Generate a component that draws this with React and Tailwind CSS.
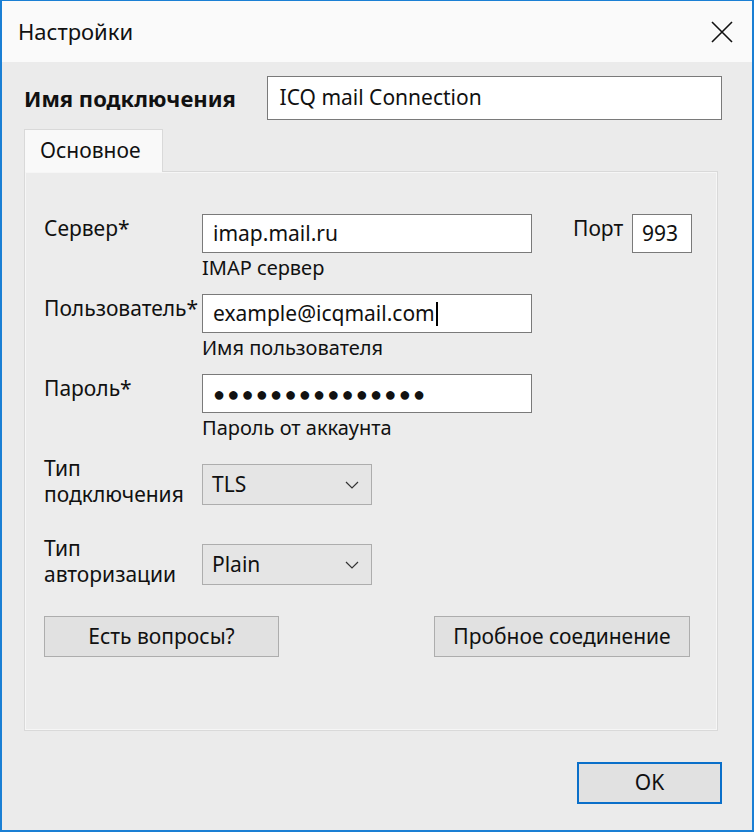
import React from 'react';

const font = { fontFamily: '"Noto Sans", "Open Sans", sans-serif' };

const Chevron = () => (
  <svg width="14" height="8" viewBox="0 0 14 8" className="shrink-0">
    <polyline points="1,1 7,7 13,1" fill="none" stroke="#333" strokeWidth="1.2" />
  </svg>
);

const Field = ({ label, value, hint, caret, dots, children }) => (
  <div className="flex h-[80px] items-start">
    <div className="w-[158px] text-[21px] leading-[28px]">{label}</div>
    <div className="flex flex-col">
      <div className="flex h-[39px] w-[330px] items-center border border-[#7a7a7a] bg-white px-[10px] text-[21px]">
        <span className={dots ? 'text-[20px] tracking-[2.2px]' : ''}>{value}</span>
        {caret && <span className="ml-[1px] h-[24px] w-[2px] bg-black" />}
      </div>
      <div className="mt-[2px] text-[20px] leading-[26px]">{hint}</div>
    </div>
    {children}
  </div>
);

const Select = ({ top, bottom, value }) => (
  <div className="flex h-[80px] items-start">
    <div className="-mt-[9px] w-[158px] text-[21px] leading-[26px]">
      <div>{top}</div>
      <div>{bottom}</div>
    </div>
    <div className="flex h-[41px] w-[170px] items-center justify-between border border-[#adadad] bg-[#e5e5e5] pl-[9px] pr-[12px] text-[21px]">
      <span>{value}</span>
      <Chevron />
    </div>
  </div>
);

export default function App() {
  return (
    <div
      style={font}
      className="flex h-[832px] w-[754px] flex-col border-x-2 border-b-2 border-t border-[#1a7fd4] text-[#111]"
    >
      <div className="flex h-[61px] shrink-0 items-center justify-between bg-[#fafafa] pl-[16px] pr-[18px]">
        <span className="text-[22px]">Настройки</span>
        <svg width="24" height="24" viewBox="0 0 24 24">
          <path d="M2 2 L22 22 M22 2 L2 22" stroke="#111" strokeWidth="1.6" />
        </svg>
      </div>

      <div className="flex flex-1 flex-col bg-[#ebebeb] pl-[22px] pr-[30px]">
        <div className="mt-[14px] flex items-center">
          <span className="w-[244px] text-[22px] font-bold">Имя подключения</span>
          <div className="flex h-[44px] w-[458px] items-center border border-[#7a7a7a] bg-white px-[12px] text-[21px]">
            ICQ mail Connection
          </div>
        </div>

        <div className="mt-[9px] flex">
          <div className="relative z-10 -mb-px flex h-[43px] w-[139px] items-center border border-b-0 border-[#d9d9d9] bg-[#f9f9f9] pl-[15px] text-[21px]">
            Основное
          </div>
        </div>
        <div className="flex h-[560px] w-[694px] flex-col border border-[#d9d9d9] bg-[#ececec] pl-[19px] pt-[42px] shadow-[inset_0_0_0_1px_#f6f6f6]">
          <Field label="Сервер*" value="imap.mail.ru" hint="IMAP сервер">
            <div className="ml-[41px] flex items-start">
              <span className="w-[59px] text-[21px] leading-[28px]">Порт</span>
              <div className="flex h-[39px] w-[60px] items-center border border-[#7a7a7a] bg-white pl-[9px] text-[21px]">
                993
              </div>
            </div>
          </Field>
          <Field label="Пользователь*" value="example@icqmail.com" hint="Имя пользователя" caret />
          <Field label="Пароль*" value="●●●●●●●●●●●●●●●" hint="Пароль от аккаунта" dots />
          <div className="mt-[10px]">
            <Select top="Тип" bottom="подключения" value="TLS" />
            <Select top="Тип" bottom="авторизации" value="Plain" />
          </div>
          <div className="-mt-[8px] flex items-center">
            <div className="flex h-[41px] w-[235px] items-center justify-center border border-[#adadad] bg-[#e1e1e1] text-[21px]">
              Есть вопросы?
            </div>
            <div className="ml-[155px] flex h-[41px] w-[256px] items-center justify-center border border-[#adadad] bg-[#e1e1e1] text-[21px]">
              Пробное соединение
            </div>
          </div>
        </div>

        <div className="mt-[31px] flex justify-end">
          <div className="flex h-[42px] w-[145px] items-center justify-center border-2 border-[#0a6fc9] bg-[#e1e1e1] text-[21px]">
            OK
          </div>
        </div>
      </div>
    </div>
  );
}
